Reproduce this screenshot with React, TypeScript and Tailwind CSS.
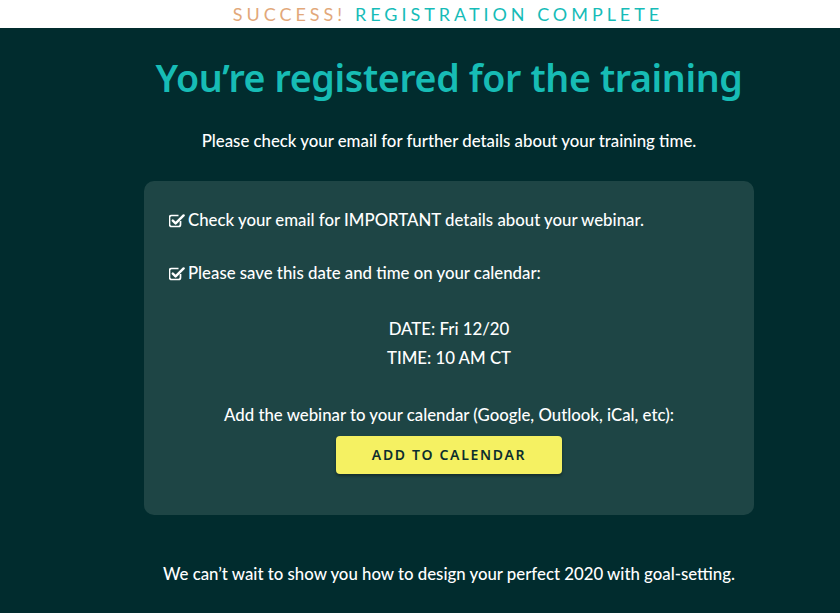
const CheckSquare = () => (
  <svg width="16" height="15" viewBox="0 0 16 15" className="mr-[3px] inline-block shrink-0" fill="none">
    <path d="M11.5 8v3.5a2 2 0 0 1-2 2h-7a2 2 0 0 1-2-2v-7a2 2 0 0 1 2-2h7" stroke="white" strokeWidth="1.7" />
    <path d="M3.8 7.6l2.8 2.8L14.6 2.4" stroke="white" strokeWidth="2.4" strokeLinecap="round" strokeLinejoin="round" />
  </svg>
);

export default function App() {
  return (
    <div className="min-h-[613px] bg-[#012c2e] font-['Lato','Liberation_Sans',sans-serif] text-white">
      <div className="flex h-[28px] items-center justify-center bg-white pl-[56px] text-[18px] tracking-[0.22em]">
        <span className="text-[#e2a87a]">SUCCESS!</span>
        <span className="ml-[9px] text-[#16bcb8]">REGISTRATION COMPLETE</span>
      </div>
      <div className="ml-[144px] w-[610px] pt-[28px]">
        <h1 className="text-center font-['Noto_Sans','Open_Sans',sans-serif] text-[37.6px] font-semibold leading-[44px] tracking-[-0.01em] text-[#17bcb5]">
          You’re registered for the training
        </h1>
        <p className="mt-[30px] text-center text-[16.8px] font-medium leading-[22px]">
          Please check your email for further details about your training time.
        </p>
        <div className="mt-[29px] rounded-[10px] bg-[#1e4545] px-[25px] pb-[41px] pt-[28px] text-[16.8px] font-medium leading-[22px]">
          <p className="flex items-center">
            <CheckSquare />
            Check your email for IMPORTANT details about your webinar.
          </p>
          <p className="mt-[31px] flex items-center">
            <CheckSquare />
            Please save this date and time on your calendar:
          </p>
          <div className="mt-[30px] text-center leading-[29px]">
            <p>DATE: Fri 12/20</p>
            <p>TIME: 10 AM CT</p>
          </div>
          <p className="mt-[32px] text-center">
            Add the webinar to your calendar (Google, Outlook, iCal, etc):
          </p>
          <div className="mt-[10px] flex justify-center">
            <button className="h-[38px] w-[226px] rounded-[4px] bg-[#f5f162] font-['Noto_Sans','Open_Sans',sans-serif] text-[14px] font-semibold tracking-[0.12em] text-[#0c2e2e] shadow-[0_2px_3px_rgba(0,0,0,0.35)]">
              ADD TO CALENDAR
            </button>
          </div>
        </div>
        <p className="mt-[48px] text-center text-[16.8px] font-medium leading-[22px]">
          We can’t wait to show you how to design your perfect 2020 with goal-setting.
        </p>
      </div>
    </div>
  );
}
